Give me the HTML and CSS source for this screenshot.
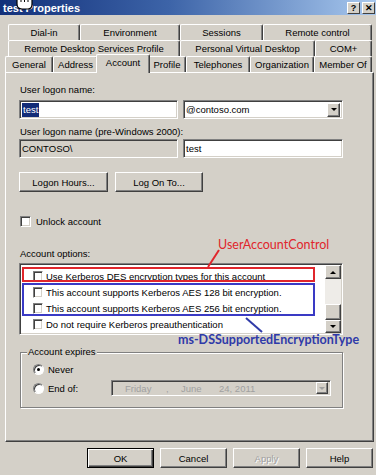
FILE: index.html
```html
<!DOCTYPE html>
<html lang="en">
<head>
    <meta charset="UTF-8">
    <title>test Properties</title>
    <link rel="stylesheet" href="styles.css">
</head>
<body>
    <div class="window">
        <div class="titlebar">
            <span class="title">test Properties</span>
            <div class="caption-btns">
                <span class="cap-btn">?</span>
                <span class="cap-btn">&#x2715;</span>
            </div>
        </div>
        <svg class="cursor" width="20" height="14" viewBox="0 0 20 14">
            <path d="M2 0 V7 Q2 12 7 12 H13 Q17 12 17 7 V0" fill="#fff" stroke="#000" stroke-width="1.2"/>
            <path d="M6 0 V5 M9.5 0 V5 M13 0 V5" stroke="#000" stroke-width="1"/>
        </svg>

        <div class="tabs">
            <div class="tab-row row1">
                <div class="tab">Dial-in</div>
                <div class="tab">Environment</div>
                <div class="tab">Sessions</div>
                <div class="tab">Remote control</div>
            </div>
            <div class="tab-row row2">
                <div class="tab">Remote Desktop Services Profile</div>
                <div class="tab">Personal Virtual Desktop</div>
                <div class="tab">COM+</div>
            </div>
            <div class="tab-row row3">
                <div class="tab">General</div>
                <div class="tab">Address</div>
                <div class="tab active">Account</div>
                <div class="tab">Profile</div>
                <div class="tab">Telephones</div>
                <div class="tab">Organization</div>
                <div class="tab">Member Of</div>
            </div>
        </div>

        <div class="panel">
            <div class="label">User logon name:</div>
            <div class="field-row">
                <div class="input"><span class="selected">test</span></div>
                <div class="input combo">
                    <span>@contoso.com</span>
                    <span class="drop-btn"></span>
                </div>
            </div>

            <div class="label label-2">User logon name (pre-Windows 2000):</div>
            <div class="field-row field-row-2">
                <div class="input disabled">CONTOSO\</div>
                <div class="input combo">test</div>
            </div>

            <div class="button-row">
                <div class="btn btn-hours">Logon Hours...</div>
                <div class="btn btn-logon">Log On To...</div>
            </div>

            <div class="check-row unlock">
                <span class="check"></span>
                <span>Unlock account</span>
            </div>

            <div class="label options-label">Account options:</div>
            <div class="listbox">
                <div class="options">
                    <div class="opt"><span class="check"></span><span>Use Kerberos DES encryption types for this account</span></div>
                    <div class="opt"><span class="check"></span><span>This account supports Kerberos AES 128 bit encryption.</span></div>
                    <div class="opt"><span class="check"></span><span>This account supports Kerberos AES 256 bit encryption.</span></div>
                    <div class="opt"><span class="check"></span><span>Do not require Kerberos preauthentication</span></div>
                </div>
                <div class="scrollbar">
                    <span class="sb-btn up"></span>
                    <span class="sb-track"><span class="sb-thumb"></span></span>
                    <span class="sb-btn down"></span>
                </div>
            </div>

            <fieldset class="group">
                <legend>Account expires</legend>
                <div class="radio-row first">
                    <span class="radio checked"></span>
                    <span class="radio-label">Never</span>
                </div>
                <div class="radio-row">
                    <span class="radio"></span>
                    <span class="radio-label">End of:</span>
                    <div class="input date">
                        <span>Friday</span>
                        <span>,</span>
                        <span>June</span>
                        <span>24, 2011</span>
                        <span class="drop-btn off"></span>
                    </div>
                </div>
            </fieldset>
        </div>

        <div class="dialog-buttons">
            <div class="btn default">OK</div>
            <div class="btn">Cancel</div>
            <div class="btn off">Apply</div>
            <div class="btn">Help</div>
        </div>

        <!-- annotations drawn over the screenshot -->
        <div class="note-box red-box"></div>
        <div class="note-box blue-box"></div>
        <svg class="note-lines" width="376" height="475">
            <line x1="219" y1="250" x2="208" y2="267" stroke="#e0262c" stroke-width="2"/>
            <line x1="246" y1="318" x2="262" y2="332" stroke="#2f3aa8" stroke-width="2"/>
        </svg>
        <div class="note red-note">UserAccountControl</div>
        <div class="note blue-note">ms-DSSupportedEncryptionType</div>
    </div>
</body>
</html>
```

FILE: styles.css
```css
* {
    box-sizing: border-box;
}

body {
    margin: 0;
    background: #d4d0c8;
    font-family: "Liberation Sans", Arial, sans-serif;
    font-size: 9.5px;
    color: #000;
}

.window {
    position: relative;
    width: 376px;
    height: 475px;
    background: #d4d0c8;
    overflow: hidden;
}

.titlebar {
    height: 15px;
    display: flex;
    align-items: center;
    justify-content: space-between;
    padding: 0 1px 0 3px;
    background: linear-gradient(to right, #12307a, #3d64a8 45%, #a8c8ee);
}

.title {
    color: #fff;
    font-weight: bold;
    font-size: 11px;
}

.caption-btns {
    display: flex;
    gap: 2px;
}

.cap-btn {
    width: 13px;
    height: 12px;
    display: flex;
    align-items: center;
    justify-content: center;
    background: #d4d0c8;
    border: 1px solid;
    border-color: #fff #404040 #404040 #fff;
    font-size: 9px;
    font-weight: bold;
}

.cursor {
    position: absolute;
    left: 15px;
    top: -3px;
}

/* tabs */
.tabs {
    margin-top: 9px;
}

.tab-row {
    display: grid;
    height: 16px;
}

.row1 {
    grid-template-columns: 72px 100px 83px 1fr;
    margin: 0 4px 0 8px;
}

.row2 {
    grid-template-columns: 172px 135px 1fr;
    margin: 0 4px 0 8px;
}

.row3 {
    grid-template-columns: 48px 45px 50px 38px 64px 64px 1fr;
    margin: 0 4px 0 5px;
}

.tab {
    border-top: 1px solid #fff;
    border-left: 1px solid #fff;
    border-right: 1px solid #404040;
    box-shadow: inset -1px 0 #808080;
    border-radius: 2px 2px 0 0;
    padding-top: 1px;
    line-height: 14px;
    text-align: center;
    white-space: nowrap;
    background: #d4d0c8;
}

.tab.active {
    margin: -2px -2px -1px;
    position: relative;
    z-index: 1;
}

/* panel */
.panel {
    height: 370px;
    margin: 0 2px 0 5px;
    padding: 11px 30px 0 13px;
    border: 1px solid;
    border-color: #fff #404040 #404040 #fff;
    box-shadow: inset -1px -1px #808080;
}

.label {
    line-height: 12px;
    padding-left: 1px;
}

.label-2 {
    margin-top: 7px;
}

.field-row {
    display: flex;
    gap: 5px;
    margin-top: 4px;
}

.field-row-2 {
    margin-top: 1px;
}

.input {
    height: 19px;
    width: 159px;
    display: flex;
    align-items: center;
    padding-left: 2px;
    background: #fff;
    border: 1px solid;
    border-color: #808080 #fff #fff #808080;
    box-shadow: inset 1px 1px #404040, inset -1px -1px #d4d0c8;
}

.input.combo {
    flex: 1;
    justify-content: space-between;
    padding-right: 2px;
}

.input.disabled {
    background: #d4d0c8;
}

.selected {
    background: #132c78;
    color: #fff;
    padding: 1px 1px 2px;
}

.drop-btn {
    width: 13px;
    height: 14px;
    display: flex;
    align-items: center;
    justify-content: center;
    background: #d4d0c8;
    border: 1px solid;
    border-color: #fff #404040 #404040 #fff;
    box-shadow: inset -1px -1px #808080;
}

.drop-btn::before {
    content: "";
    border-top: 3px solid #000;
    border-left: 3px solid transparent;
    border-right: 3px solid transparent;
}

.drop-btn.off::before {
    border-top-color: #a0a0a0;
}

.btn {
    height: 20px;
    display: flex;
    align-items: center;
    justify-content: center;
    border: 1px solid;
    border-color: #fff #404040 #404040 #fff;
    box-shadow: inset -1px -1px #808080;
}

.button-row {
    display: flex;
    gap: 7px;
    margin-top: 14px;
}

.btn-hours {
    width: 89px;
}

.btn-logon {
    width: 88px;
}

.check-row {
    display: flex;
    align-items: center;
    gap: 5px;
    height: 12px;
    padding-left: 1px;
}

.unlock {
    margin-top: 23px;
}

.check {
    flex: none;
    width: 11px;
    height: 11px;
    background: #fff;
    border: 1px solid;
    border-color: #808080 #fff #fff #808080;
    box-shadow: inset 1px 1px #404040, inset -1px -1px #d4d0c8;
}

.options-label {
    margin-top: 21px;
}

/* account options list */
.listbox {
    display: flex;
    height: 72px;
    margin-top: 3px;
    background: #fff;
    border: 1px solid;
    border-color: #808080 #fff #fff #808080;
    box-shadow: inset 1px 1px #404040, inset -1px -1px #d4d0c8;
    padding: 1px;
}

.options {
    flex: 1;
    padding: 3px 0 0 12px;
}

.opt {
    display: flex;
    align-items: center;
    gap: 3px;
    height: 16px;
}

.opt .check {
    width: 10px;
    height: 11px;
}

.scrollbar {
    width: 16px;
    display: flex;
    flex-direction: column;
}

.sb-btn {
    height: 14px;
    display: flex;
    align-items: center;
    justify-content: center;
    background: #d4d0c8;
    border: 1px solid;
    border-color: #fff #404040 #404040 #fff;
    box-shadow: inset -1px -1px #808080;
}

.sb-btn.down {
    height: 13px;
}

.sb-btn.up::before {
    content: "";
    border-bottom: 3px solid #000;
    border-left: 3px solid transparent;
    border-right: 3px solid transparent;
}

.sb-btn.down::before {
    content: "";
    border-top: 3px solid #000;
    border-left: 3px solid transparent;
    border-right: 3px solid transparent;
}

.sb-track {
    flex: 1;
    display: flex;
    flex-direction: column;
    justify-content: flex-end;
    background: #eeece8;
}

.sb-thumb {
    height: 16px;
    background: #d4d0c8;
    border: 1px solid;
    border-color: #fff #404040 #404040 #fff;
    box-shadow: inset -1px -1px #808080;
}

/* account expires */
.group {
    width: 323px;
    height: 62px;
    margin: 11px 0 0 1px;
    padding: 0 0 0 6px;
    border: 1px solid #808080;
    box-shadow: 1px 1px #fff, inset 1px 1px #fff;
}

.group legend {
    padding: 0 1px;
    line-height: 12px;
    background: #d4d0c8;
}

.radio-row {
    display: flex;
    align-items: center;
    gap: 4px;
    height: 16px;
    margin: 3px 0 0 6px;
}

.radio {
    flex: none;
    width: 11px;
    height: 11px;
    display: flex;
    align-items: center;
    justify-content: center;
    border-radius: 50%;
    background: #fff;
    border: 1px solid;
    border-color: #808080 #fff #fff #808080;
    box-shadow: inset 1px 1px #404040;
}

.radio.checked::after {
    content: "";
    width: 3px;
    height: 3px;
    border-radius: 50%;
    background: #000;
}

.radio-label {
    width: 59px;
}

.input.date {
    width: 220px;
    height: 16px;
    display: grid;
    grid-template-columns: 41px 15px 38px 1fr 13px;
    padding: 0 1px 0 13px;
    background: #d4d0c8;
    color: #a0a0a0;
}

.input.date .drop-btn {
    height: 12px;
    width: 12px;
}

/* dialog buttons */
.dialog-buttons {
    display: flex;
    justify-content: flex-end;
    gap: 6px;
    margin-top: 6px;
    padding-right: 3px;
}

.dialog-buttons .btn {
    width: 67px;
}

.btn.default {
    border: 1px solid #000;
    box-shadow: inset 1px 1px #fff, inset -1px -1px #404040, inset -2px -2px #808080;
}

.btn.off {
    color: #a0a0a0;
    text-shadow: 1px 1px #fff;
}

/* annotations */
.note-box {
    position: absolute;
    left: 22px;
    width: 293px;
    border: 2px solid;
}

.red-box {
    top: 267px;
    height: 15px;
    border-color: #e0262c;
}

.blue-box {
    top: 283px;
    height: 33px;
    border-color: #3a3ac4;
}

.note-lines {
    position: absolute;
    left: 0;
    top: 0;
}

.note {
    position: absolute;
    font-family: Lato, "Open Sans", sans-serif;
    font-size: 12.5px;
    line-height: 14px;
}

.red-note {
    left: 218px;
    top: 238px;
    color: #e0262c;
}

.blue-note {
    left: 178px;
    top: 333px;
    color: #2f3aa8;
    font-weight: bold;
}
```
